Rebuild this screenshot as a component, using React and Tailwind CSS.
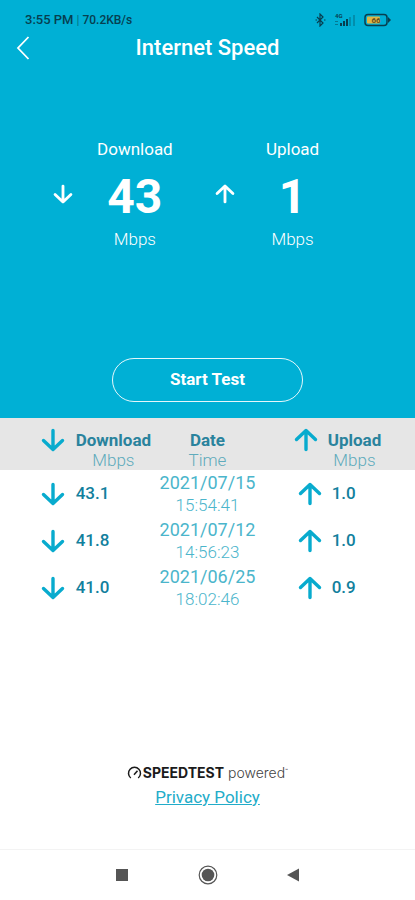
const results = [
  { down: "43.1", up: "1.0", date: "2021/07/15", time: "15:54:41" },
  { down: "41.8", up: "1.0", date: "2021/07/12", time: "14:56:23" },
  { down: "41.0", up: "0.9", date: "2021/06/25", time: "18:02:46" },
];

export default function App() {
  return (
    <div className="flex min-h-screen flex-col bg-white font-['Roboto',sans-serif]">
      <div className="bg-[#00b0d5] pb-4 text-white">
        <StatusBar />
        <header className="grid h-9 grid-cols-[46px_1fr_46px] items-center">
          <button aria-label="Back" className="flex justify-center">
            <svg width="14" height="24" viewBox="0 0 14 24" fill="none" stroke="currentColor" strokeWidth="1.8">
              <path d="M12.5 1 L2 12 L12.5 23" />
            </svg>
          </button>
          <h1 className="text-center text-[22px] font-medium leading-7">Internet Speed</h1>
        </header>

        <div className="grid grid-cols-[20%_25%_14%_23%] pt-[71px]">
          <Gauge label="Download" value="43" direction="down" />
          <Gauge label="Upload" value="1" direction="up" />
        </div>

        <div className="flex justify-center pt-[107px]">
          <button className="h-11 w-[46%] rounded-full border border-white/90 text-[17px] font-bold">
            Start Test
          </button>
        </div>
      </div>

      <table className="w-full table-fixed border-collapse text-[#12809d]">
        <colgroup>
          <col className="w-[18%]" />
          <col className="w-[19%]" />
          <col className="w-[26%]" />
          <col className="w-[15%]" />
          <col className="w-[22%]" />
        </colgroup>
        <thead>
          <tr className="bg-[#e6e6e6] align-top">
            <th className="pt-2.5 pr-2.5">
              <Arrow direction="down" className="ml-auto h-6 w-6" />
            </th>
            <HeadCell title="Download" unit="Mbps" className="pl-px text-left" />
            <HeadCell title="Date" unit="Time" className="text-center" center />
            <th className="pt-2.5 pr-1.5">
              <Arrow direction="up" className="ml-auto h-6 w-6" />
            </th>
            <HeadCell title="Upload" unit="Mbps" className="pl-1 text-left" />
          </tr>
        </thead>
        <tbody>
          {results.map((r) => (
            <tr key={r.date} className="h-[47px] text-[17px]">
              <td className="pr-2.5">
                <Arrow direction="down" className="ml-auto h-6 w-6" />
              </td>
              <td className="pl-px font-medium">{r.down}</td>
              <td className="text-center leading-[23px] text-[#4bb5cb]">
                <div className="text-lg leading-[23px]">{r.date}</div>
                <div className="font-light">{r.time}</div>
              </td>
              <td className="pr-0.5">
                <Arrow direction="up" className="ml-auto h-6 w-6" />
              </td>
              <td className="pl-2 font-medium">{r.up}</td>
            </tr>
          ))}
        </tbody>
      </table>

      <footer className="mt-auto flex flex-col items-center pb-10">
        <div className="flex h-5 items-center text-[#1b1b1b]">
          <SpeedLogo />
          <span className="ml-px font-['Inter',sans-serif] text-sm font-bold">SPEEDTEST</span>
          <span className="ml-1 font-['Inter',sans-serif] text-sm font-light text-[#444]">powered</span>
          <span className="mb-1 text-[5px]">™</span>
        </div>
        <a href="#privacy" className="mt-0.5 text-[17px] leading-6 text-[#22acc9] underline">
          Privacy Policy
        </a>
      </footer>

      <nav className="flex h-[51px] items-center justify-center gap-[67px] border-t border-[#f3f3f3] text-[#555]">
        <button aria-label="Recent apps">
          <svg width="18" height="20" viewBox="0 0 18 20" fill="currentColor">
            <rect x="3" y="4" width="12" height="12" />
          </svg>
        </button>
        <button aria-label="Home">
          <svg width="20" height="20" viewBox="0 0 20 20">
            <circle cx="10" cy="10" r="8.8" fill="none" stroke="currentColor" strokeWidth="1.2" />
            <circle cx="10" cy="10" r="6.3" fill="currentColor" />
          </svg>
        </button>
        <button aria-label="Go back">
          <svg width="18" height="20" viewBox="0 0 18 20" fill="currentColor">
            <path d="M2 10 L14 3.5 V16.5 Z" />
          </svg>
        </button>
      </nav>
    </div>
  );
}

function Gauge({ label, value, direction }) {
  return (
    <>
      <div className="flex items-center justify-end pr-2.5">
        <Arrow direction={direction} className="h-5 w-5 text-white" />
      </div>
      <div className="text-center">
        <div className="text-[17px] leading-6">{label}</div>
        <div className="pt-1.5 text-5xl font-bold leading-[60px]">{value}</div>
        <div className="text-[17px] font-light leading-6">Mbps</div>
      </div>
    </>
  );
}

function HeadCell({ title, unit, className, center }) {
  return (
    <th className={`pt-3 ${className}`}>
      <div className={center ? "leading-5" : "w-fit text-center leading-5"}>
        <div className="text-[17px] font-bold text-[#2a839d]">{title}</div>
        <div className="text-[17px] font-light text-[#5fabbc]">{unit}</div>
      </div>
    </th>
  );
}

function Arrow({ direction, className }) {
  return (
    <svg
      viewBox="0 0 24 24"
      className={`block ${className}`}
      fill="none"
      stroke={className.includes("text-white") ? "currentColor" : "#08abce"}
      strokeWidth="3.4"
      strokeLinecap="round"
      strokeLinejoin="round"
    >
      {direction === "down" ? (
        <path d="M12 2.5 V21.5 M2.5 12.5 L12 21.5 L21.5 12.5" />
      ) : (
        <path d="M12 21.5 V2.5 M2.5 11.5 L12 2.5 L21.5 11.5" />
      )}
    </svg>
  );
}

function StatusBar() {
  return (
    <div className="flex h-[30px] items-end justify-between pl-[25px] pr-6 text-[#073f50]">
      <div className="text-xs font-medium leading-5">
        <span className="text-[13px]">3:55 PM</span> <span className="font-normal opacity-60">|</span> 70.2KB/s
      </div>
      <div className="flex h-5 items-center gap-2">
        <svg width="11" height="14" viewBox="0 0 11 14" fill="none" stroke="currentColor" strokeWidth="1.2">
          <path d="M2 4 L8 10 L5 13 V1 L8 4 L2 10" />
          <path d="M0.5 7 H2 M9 7 H10.5" />
        </svg>
        <svg width="22" height="16" viewBox="0 0 22 16" fill="currentColor">
          <text x="1" y="6" fontSize="6" fontWeight="700">4G</text>
          <rect x="1" y="9" width="3" height="1" opacity="0.5" />
          <rect x="1" y="12" width="3" height="1" opacity="0.5" />
          <rect x="6" y="11" width="2" height="3" />
          <rect x="9" y="9" width="2" height="5" />
          <rect x="12" y="7" width="2" height="7" />
          <rect x="15" y="5" width="2" height="9" opacity="0.3" />
          <rect x="19" y="3" width="2" height="11" opacity="0.3" />
        </svg>
        <svg width="27" height="14" viewBox="0 0 27 14">
          <rect x="1" y="1.5" width="22" height="11" rx="3" fill="none" stroke="currentColor" strokeWidth="1.5" />
          <path d="M24 4 L27 7 L24 10 Z" fill="currentColor" />
          <rect x="3" y="3.5" width="13" height="7" rx="1" fill="#dfb544" />
          <text x="12" y="10" fontSize="8" fontWeight="700" textAnchor="middle" fill="#68501c">66</text>
        </svg>
      </div>
    </div>
  );
}

function SpeedLogo() {
  return (
    <svg width="15" height="14" viewBox="0 0 15 14" fill="none" stroke="currentColor" strokeWidth="1.5">
      <path d="M3.8 12 A6 6 0 1 1 11.2 12" />
      <path d="M7 8.8 L10.5 4.8" />
    </svg>
  );
}
